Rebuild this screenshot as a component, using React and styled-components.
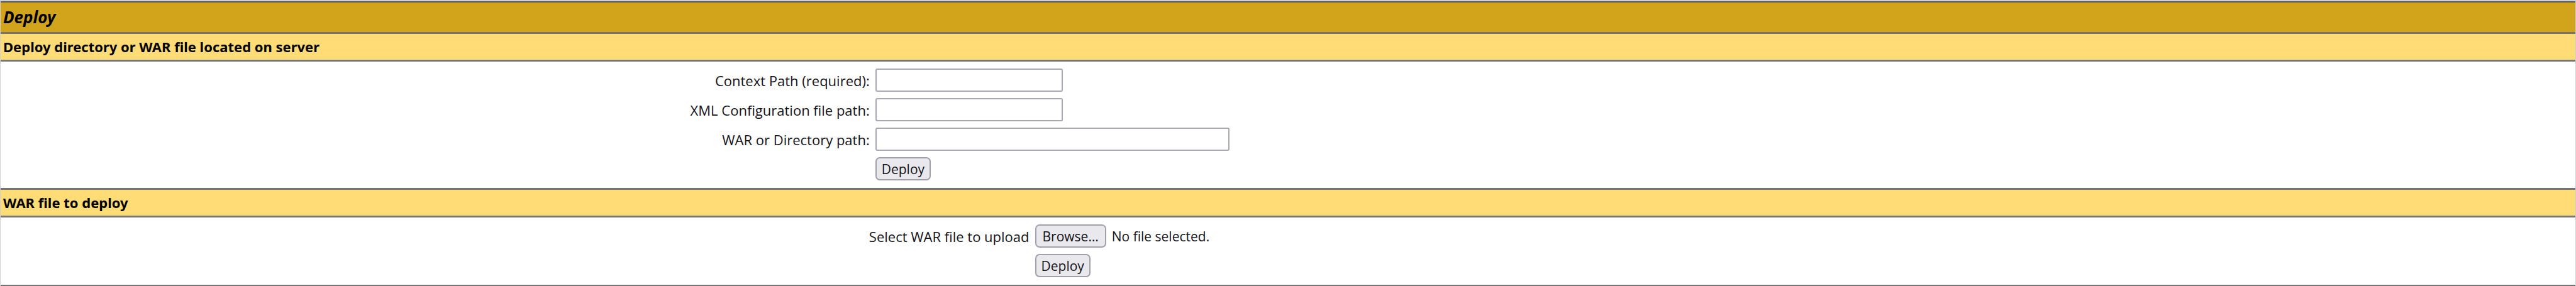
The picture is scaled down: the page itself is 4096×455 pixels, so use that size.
import React, { useRef, useState } from "react";
import styled, { createGlobalStyle } from "styled-components";

const GlobalStyle = createGlobalStyle`
  * { box-sizing: border-box; }
  body {
    margin: 0;
    background: #fff;
    color: #15141a;
    font-family: "Open Sans", "Noto Sans", sans-serif;
    font-size: 22px;
    line-height: 30px;
  }
`;

const Panel = styled.main`
  border: 1px solid #d0d0d0;
  border-top: 2px solid #cfd2dc;
  border-bottom: 0;
`;

const Title = styled.h1`
  margin: 0;
  padding: 6px 4px 7px;
  border-top: 2px solid #5c5648;
  border-bottom: 3px solid #77736c;
  background: #d2a41c;
  color: #000;
  font-family: "Noto Sans", sans-serif;
  font-size: 26px;
  font-style: italic;
  font-weight: 700;
  line-height: 34px;
`;

const Heading = styled.h2`
  margin: 0;
  padding: 5px 4px 6px;
  border-bottom: 3px solid #777;
  background: #ffdc75;
  color: #000;
  font-family: "Noto Sans", sans-serif;
  font-size: 22px;
  font-weight: 700;
  line-height: 30px;
`;

const Form = styled.form`
  display: flex;
  flex-direction: column;
  gap: 10px;
  padding: 11px 0 12px;
  border-bottom: 3px solid #747474;
`;

const Row = styled.div`
  display: grid;
  grid-template-columns: ${(p) => p.$label} 1fr;
  column-gap: 9px;
  align-items: center;
`;

const Label = styled.label`
  text-align: right;
`;

const Field = styled.div`
  grid-column: 2;
  display: flex;
  align-items: center;
  gap: 9px;
`;

const TextInput = styled.input`
  width: ${(p) => (p.$wide ? 563 : 298)}px;
  height: 37px;
  padding: 2px 4px;
  border: 2px solid #a9a8b3;
  border-radius: 3px;
  background: #fff;
  font: inherit;
`;

const Button = styled.button`
  height: 37px;
  padding: 0 8px;
  border: 2px solid #a09fac;
  border-radius: 7px;
  background: #e9e9ed;
  color: #15141a;
  font: inherit;
  font-size: 21px;
  line-height: 30px;
`;

const BrowseButton = styled(Button)`
  padding: 0 10px;
`;

const FileName = styled.span`
  font-size: 21px;
`;

export default function App() {
  const picker = useRef(null);
  const [fileName, setFileName] = useState("");
  const stay = (e) => e.preventDefault();

  return (
    <>
      <GlobalStyle />
      <Panel>
        <Title>Deploy</Title>

        <Heading>Deploy directory or WAR file located on server</Heading>
        <Form onSubmit={stay}>
          <Row $label="33.75%">
            <Label htmlFor="path">Context Path (required):</Label>
            <Field><TextInput id="path" type="text" /></Field>
          </Row>
          <Row $label="33.75%">
            <Label htmlFor="config">XML Configuration file path:</Label>
            <Field><TextInput id="config" type="text" /></Field>
          </Row>
          <Row $label="33.75%">
            <Label htmlFor="war">WAR or Directory path:</Label>
            <Field><TextInput id="war" type="text" $wide /></Field>
          </Row>
          <Row $label="33.75%">
            <Field><Button type="submit">Deploy</Button></Field>
          </Row>
        </Form>

        <Heading>WAR file to deploy</Heading>
        <Form onSubmit={stay}>
          <Row $label="39.95%">
            <Label htmlFor="upload">Select WAR file to upload</Label>
            <Field>
              <BrowseButton type="button" onClick={() => picker.current.click()}>Browse…</BrowseButton>
              <FileName>{fileName || "No file selected."}</FileName>
              <input
                id="upload"
                type="file"
                hidden
                ref={picker}
                onChange={(e) => setFileName(e.target.files[0]?.name ?? "")}
              />
            </Field>
          </Row>
          <Row $label="39.95%">
            <Field><Button type="submit">Deploy</Button></Field>
          </Row>
        </Form>
      </Panel>
    </>
  );
}
